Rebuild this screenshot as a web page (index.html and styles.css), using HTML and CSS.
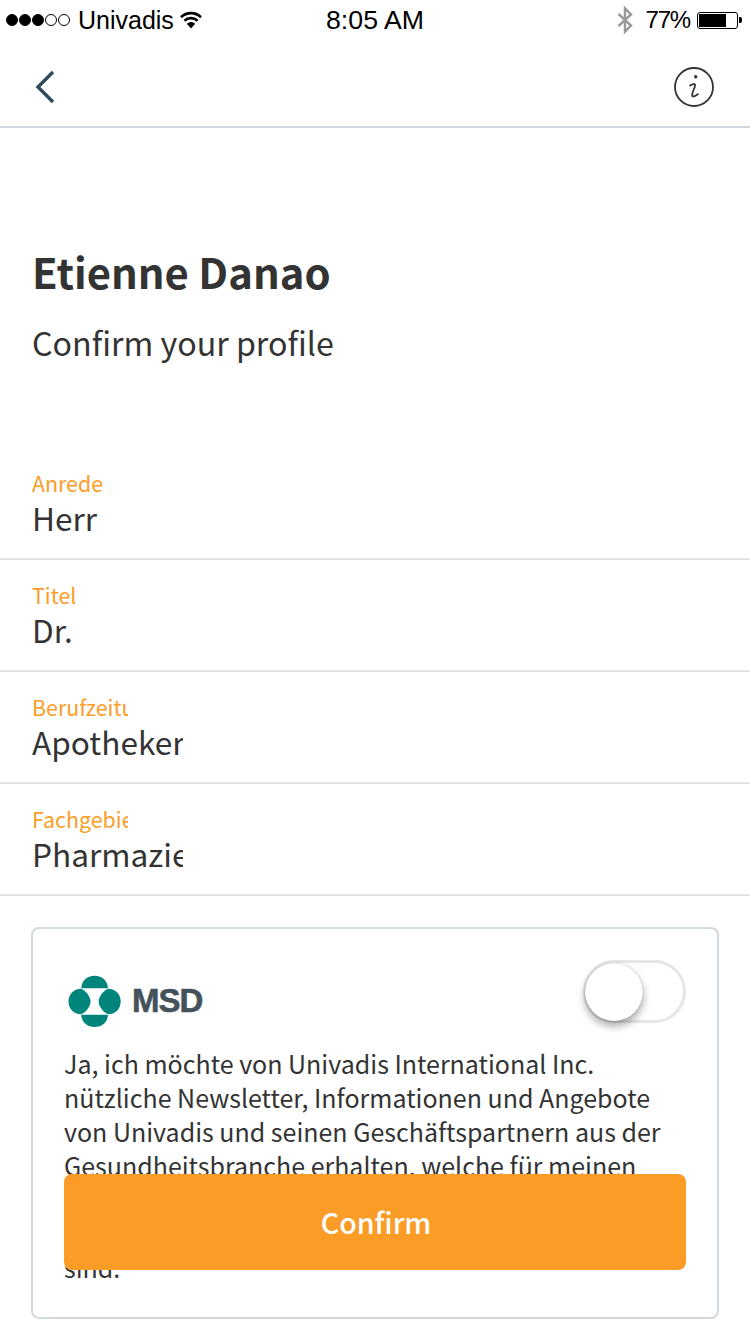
FILE: index.html
```html
<!DOCTYPE html>
<html lang="de">
<head>
<meta charset="utf-8">
<title>Confirm your profile</title>
<link rel="stylesheet" href="styles.css">
</head>
<body>
<div class="status">
  <div class="status-left">
    <span class="signal"><i class="dot on"></i><i class="dot on"></i><i class="dot on"></i><i class="dot"></i><i class="dot"></i></span>
    <span class="carrier">Univadis</span>
    <svg class="wifi" width="22" height="18" viewBox="0 0 22 18"><path d="M1 6.200a14.400 14.400 0 0 1 20 0" fill="none" stroke="#000" stroke-width="2.600"/><path d="M4.400 9.800a9.600 9.600 0 0 1 13.200 0" fill="none" stroke="#000" stroke-width="2.600"/><path d="M6.800 12.800a6 6 0 0 1 8.400 0L11 17.500z" fill="#000"/></svg>
  </div>
  <div class="status-time">8:05 AM</div>
  <div class="status-right">
    <svg class="bt" width="18" height="30" viewBox="0 0 18 30"><path d="M2.500 9 15 20.500 9 26.500V3.500l6 6L2.500 21" fill="none" stroke="#999" stroke-width="2.400"/></svg>
    <span class="pct">77%</span>
    <span class="battery"><span class="battery-fill"></span></span><span class="battery-cap"></span>
  </div>
</div>
<header class="nav">
  <svg width="22" height="36" viewBox="0 0 22 36"><path d="M18 3 3 18l15 15" fill="none" stroke="#2f4a5c" stroke-width="3.400"/></svg>
  <svg width="42" height="42" viewBox="0 0 42 42"><circle cx="21" cy="21" r="19" fill="none" stroke="#333" stroke-width="1.800"/><circle cx="22.700" cy="10.700" r="1.700" fill="#333"/><path d="M16.500 20c2.200-1.600 5.600-3 5.600-.8 0 2.200-3 7-3 10 0 2.400 3.600 1 6.400-1.600" fill="none" stroke="#333" stroke-width="1.800"/></svg>
</header>
<main>
  <section class="intro">
    <h1>Etienne Danao</h1>
    <p>Confirm your profile</p>
  </section>
  <section class="fields">
    <div class="field"><div class="label">Anrede</div><div class="value">Herr</div></div>
    <div class="field"><div class="label">Titel</div><div class="value">Dr.</div></div>
    <div class="field"><div class="label">Berufzeitung</div><div class="value">Apotheker</div></div>
    <div class="field"><div class="label">Fachgebiet</div><div class="value">Pharmazie</div></div>
  </section>
  <section class="card">
    <div class="card-head">
      <div class="logo">
        <svg width="55" height="52" viewBox="0 0 55 52"><g fill="#00857c"><path d="M14.300 13.300C14.300 6 20 .7 27.600 .7S40.900 6 40.900 13.300Z"/><path d="M14.300 39.700C14.300 47 20 52 27.600 52S40.900 47 40.900 39.700Z"/><path d="M14 13.700C6.500 13.700 1.500 19.500 1.500 26.500S6.500 39.300 14 39.300C18 38 23.500 32 23.500 26.500S18 15 14 13.700Z"/><path d="M41.200 13.700C48.700 13.700 53.700 19.500 53.700 26.500S48.700 39.300 41.200 39.300C37.200 38 31.700 32 31.700 26.500S37.200 15 41.200 13.700Z"/></g></svg>
        <span class="msd">MSD</span>
      </div>
      <div class="toggle"><span class="knob"></span></div>
    </div>
    <p class="consent">Ja, ich möchte von Univadis International Inc.<br>nützliche Newsletter, Informationen und Angebote<br>von Univadis und seinen Geschäftspartnern aus der<br>Gesundheitsbranche erhalten, welche für meinen<br>Fachbereich relevant und für meine<br>berufliche Tätigkeit von Interesse<br>sind.</p>
  </section>
</main>
<button class="confirm">Confirm</button>
</body>
</html>
```
FILE: styles.css
```css
* { box-sizing: border-box; }
html, body { margin: 0; padding: 0; }
body {
  width: 750px;
  height: 1334px;
  overflow: hidden;
  position: relative;
  background: #fff;
  color: #333;
  font-family: "Noto Sans CJK SC", "Noto Sans", sans-serif;
}
.status {
  height: 40px;
  display: grid;
  grid-template-columns: 1fr auto 1fr;
  align-items: center;
  padding: 0 6px;
  color: #000;
  font-family: "Liberation Sans", sans-serif;
  font-size: 25px;
}
.status-left, .status-right { display: flex; align-items: center; }
.status-right { justify-content: flex-end; margin-right: 2px; }
.signal { display: flex; gap: 1px; margin-right: 8px; }
.dot { width: 12px; height: 12px; border-radius: 50%; border: 1px solid #000; }
.dot.on { background: #000; }
.wifi { margin-left: 6px; }
.status-time { font-size: 26.7px; }
.bt { margin-right: 12px; }
.pct { margin-right: 7px; font-size: 24px; letter-spacing: -1.2px; }
.battery { width: 41px; height: 17px; border: 1px solid #000; border-radius: 3px; padding: 1px; display: block; }
.battery-fill { display: block; width: 27px; height: 100%; background: #000; }
.battery-cap { width: 3px; height: 6px; margin-left: 1px; background: #000; border-radius: 0 2px 2px 0; }
.nav {
  height: 88px;
  display: flex;
  justify-content: space-between;
  align-items: center;
  padding: 8px 35px 0 35px;
  border-bottom: 2px solid #d0dade;
}
.intro { padding: 116px 32px 0; height: 320px; }
h1 { margin: 0; font-size: 41.8px; line-height: 54px; font-weight: 700; color: #333; }
.intro p { margin: 23px 0 0; font-size: 32.2px; line-height: 42px; color: #333; }
.field {
  height: 112px;
  padding: 21px 0 0 32px;
  border-bottom: 2px solid #e2e2e2;
}
.label {
  width: 96px;
  overflow: hidden;
  white-space: nowrap;
  color: #fb9d28;
  font-size: 21.4px;
  line-height: 28px;
}
.value {
  width: 151px;
  overflow: hidden;
  white-space: nowrap;
  font-size: 31.6px;
  line-height: 42px;
  margin-top: -1px;
}
.card {
  margin: 31px 31px 0;
  height: 392px;
  border: 2px solid #d0dade;
  border-radius: 8px;
  padding: 31px 32px 0 31px;
}
.card-head { display: flex; justify-content: space-between; align-items: flex-start; height: 86px; }
.logo { display: flex; align-items: center; gap: 10px; margin: 15px 0 0 3px; }
.msd {
  font-family: "Liberation Sans", sans-serif;
  font-weight: 700;
  font-size: 33px;
  letter-spacing: -1px;
  -webkit-text-stroke: .6px #44525c;
  color: #44525c;
}
.toggle {
  width: 103px;
  height: 63px;
  margin-right: -1px;
  border: 3px solid #e6e6e6;
  border-radius: 32px;
  position: relative;
}
.knob {
  position: absolute;
  left: -1px;
  top: 0;
  width: 58px;
  height: 58px;
  border-radius: 50%;
  background: #fff;
  box-shadow: 0 5px 8px rgba(0,0,0,.35), 0 0 1px rgba(0,0,0,.4);
}
.consent { margin: 0; font-size: 25px; line-height: 34px; white-space: nowrap; color: #333; }
.confirm {
  position: absolute;
  left: 64px;
  top: 1174px;
  width: 622px;
  height: 96px;
  padding: 0 0 2px 2px;
  border: 0;
  border-radius: 8px;
  background: #fa9c26;
  color: #fff;
  font-family: inherit;
  font-size: 28.6px;
  font-weight: 500;
}
```
